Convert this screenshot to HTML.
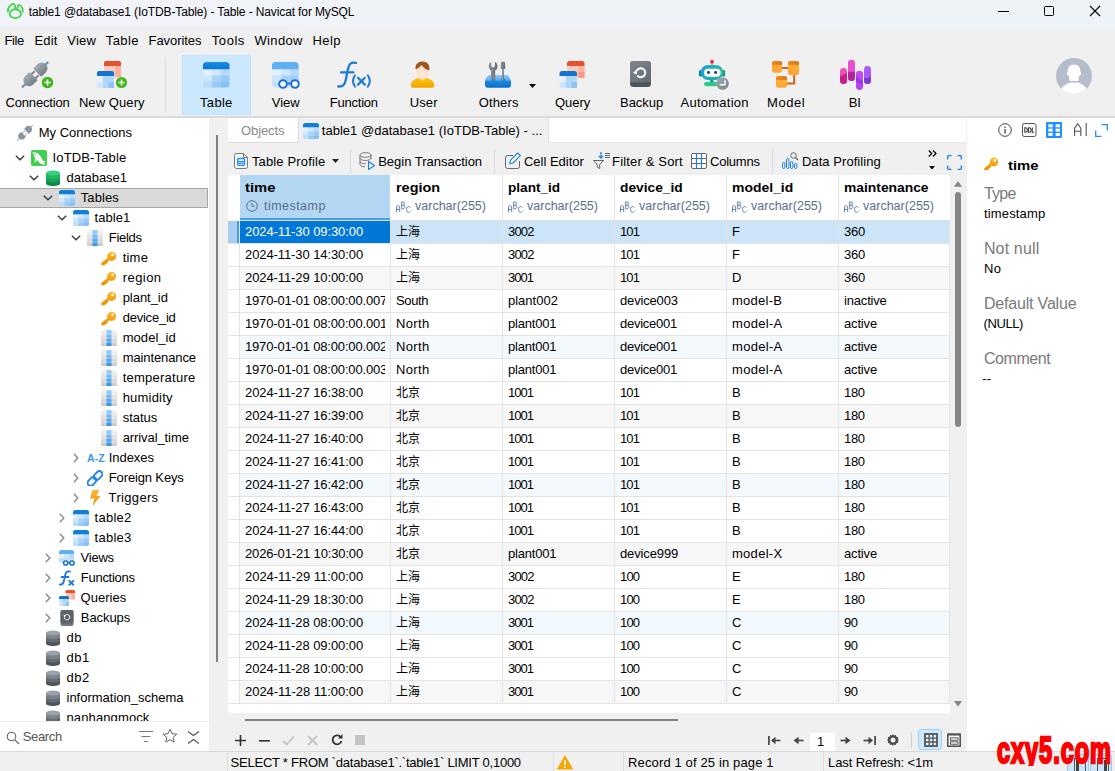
<!DOCTYPE html>
<html><head><meta charset="utf-8"><title>Navicat</title>
<style>
*{box-sizing:border-box;margin:0;padding:0}
html,body{width:1115px;height:771px;overflow:hidden;background:#f0f0f0;font-family:"Liberation Sans",sans-serif;font-size:13px;color:#000;}
body{position:relative}
.abs{position:absolute}
.t{position:absolute;white-space:nowrap;line-height:16px;height:16px;letter-spacing:-0.25px}
svg{display:block;position:absolute;overflow:visible}
.cjk{font-family:"Liberation Sans","Noto Sans CJK SC",sans-serif;font-size:12px;letter-spacing:0}
/* title bar */
#title{position:absolute;left:0;top:0;width:1115px;height:27px;background:linear-gradient(90deg,#f2f3f8 0%,#eff3f7 35%,#eef3f8 100%)}
/* toolbar */
#tb{position:absolute;left:0;top:27px;width:1115px;height:89px;background:#f0f0f0}
#tbline{position:absolute;left:0;top:116px;width:1115px;height:2px;background:#dadada}
.tl{position:absolute;top:95px;width:90px;text-align:center;line-height:16px;letter-spacing:-0.3px;white-space:nowrap}
/* tree */
#tree{position:absolute;left:0;top:118px;width:209px;height:603px;background:#fff;overflow:hidden}
.tr{position:absolute;left:0;width:209px;height:20px}
.tr .t{top:2px}
.chev{position:absolute;top:6px;width:9px;height:9px}
/* main */
#main{position:absolute;left:228px;top:118px;width:739px;height:633px;background:#f0f0f0;overflow:hidden}
.grow{position:absolute;left:0;width:722px;height:23px;background:#fff;border-bottom:1px solid #e3e3e3}
.grow.alt{background:#f4f9fd}
.grow.altg{background:#f7f7f7}
.grow.sel{background:#cce4f7}
.gc{position:absolute;top:0;height:22px;line-height:22px;padding-left:5px;border-right:1px solid #e3e3e3;white-space:nowrap;overflow:hidden;letter-spacing:-0.2px}
.gc.cur{background:#0078d7;color:#fff}
.gc.long .ct{display:block;width:140px;overflow:hidden}
.hc{position:absolute;top:57px;height:45px;background:#fff;border-right:1px solid #e3e3e3}
.hc b{position:absolute;left:5px;top:5px;line-height:16px;font-weight:bold;letter-spacing:-0.2px;white-space:nowrap}
.hc span{position:absolute;left:24px;top:23px;line-height:16px;color:#5a6e8c;letter-spacing:-0.25px;white-space:nowrap;font-size:12.5px}
/* right */
#right{position:absolute;left:967px;top:118px;width:148px;height:633px;background:#fff}
/* bottom */
#status{position:absolute;left:0;top:751px;width:1115px;height:20px;background:#f0f0f0;border-top:1px solid #d9d9d9}
.rl{font-size:16px;color:#7a7a7a;line-height:18px;height:18px;letter-spacing:-0.2px}
.ri{position:absolute;left:0;top:0;width:12px;height:22px;background:#fff;border-right:1px solid #e3e3e3}

</style></head>
<body>
<div id="title">
<svg style="left:6px;top:2px" width="19" height="19" viewBox="0 0 19 19"><g fill="none" stroke="#3dd44b" stroke-width="1.800" stroke-linecap="round" stroke-linejoin="round"><ellipse cx="9.350" cy="11.800" rx="5.700" ry="4.400"></ellipse><path d="M1.900 9.700C1.500 5.600 4.300 2.400 7.200 1.900c1.400-.2 2 1.900 2.200 5.300"></path><path d="M16.800 9.700C17 6.700 15.400 3.700 13.300 3c-1.100-.3-1.800 1.500-2 3.800"></path></g></svg>
<div class="t" style="left: 28.7px; top: 4px; font-size: 12px; letter-spacing: -0.12px;">table1 @database1 (IoTDB-Table) - Table - Navicat for MySQL</div>
<svg style="left:998px;top:11px" width="11" height="1" viewBox="0 0 11 1"><rect width="11" height="1" fill="#000"></rect></svg>
<svg style="left:1044px;top:6px" width="10" height="10" viewBox="0 0 10 10"><rect x=".5" y=".5" width="9" height="9" rx="1" fill="none" stroke="#000"></rect></svg>
<svg style="left:1090px;top:6px" width="10" height="10" viewBox="0 0 10 10"><path d="M0 0L10 10M10 0L0 10" stroke="#000" stroke-width="1.1"></path></svg>
</div>

<div id="tb">
<!-- menu -->
<div class="t" style="left: 4.5px; top: 6px; letter-spacing: -0.38px;">File</div>
<div class="t" style="left: 34.5px; top: 6px; letter-spacing: 0.13px;">Edit</div>
<div class="t" style="left: 67.3px; top: 6px; letter-spacing: 0.22px;">View</div>
<div class="t" style="left: 105.8px; top: 6px; letter-spacing: 0.41px;">Table</div>
<div class="t" style="left: 148.5px; top: 6px; letter-spacing: -0.06px;">Favorites</div>
<div class="t" style="left: 211.8px; top: 6px; letter-spacing: 0.55px;">Tools</div>
<div class="t" style="left: 254.5px; top: 6px; letter-spacing: 0.35px;">Window</div>
<div class="t" style="left: 312.5px; top: 6px; letter-spacing: 0.42px;">Help</div>
<!-- separator -->
<div class="abs" style="left:165px;top:30px;width:1px;height:56px;background:#dcdcdc"></div>
<!-- selected button -->
<div class="abs" style="left:182px;top:28px;width:69px;height:60px;background:#cce8ff;border:1px solid #c3e3fd"></div>
</div>
<!-- ICONS (page coords) -->
<!-- Connection -->
<svg style="left:20px;top:59px" width="34" height="32" viewBox="0 0 34 32">
 <defs><linearGradient id="plg" x1="0" y1="0" x2="0" y2="1"><stop offset="0" stop-color="#a4abb2"></stop><stop offset="1" stop-color="#767e86"></stop></linearGradient></defs>
 <g transform="translate(15.300,15.500) rotate(-44)">
  <rect x="-18.500" y="-1.100" width="6" height="2.200" fill="#6990b8"></rect>
  <path d="M-8.500-5.800H-3.300a1 1 0 0 1 1 1V4.800a1 1 0 0 1-1 1H-8.500a5.800 5.800 0 0 1 0-11.600z" fill="url(#plg)"></path>
  <rect x="-2.500" y="-3.800" width="4.300" height="1.900" fill="#7d858c"></rect><rect x="-2.500" y="1.900" width="4.300" height="1.900" fill="#7d858c"></rect>
  <path d="M9 -5.800H3.800a1.200 1.200 0 0 0-1.200 1.200V4.600a1.200 1.200 0 0 0 1.200 1.200H9a5.800 5.800 0 0 0 0-11.600z" fill="url(#plg)"></path>
  <rect x="13.500" y="-1.100" width="4.500" height="2.200" fill="#6990b8"></rect>
 </g>
 <circle cx="27.500" cy="23.500" r="5.700" fill="#3db51c"></circle><path d="M24.400 23.500h6.200M27.500 20.400v6.200" stroke="#fff" stroke-width="1.600"></path>
</svg>
<!-- New Query -->
<svg style="left:96px;top:60px" width="34" height="30" viewBox="0 0 34 30">
 <rect x="8" y="1" width="17" height="16.500" rx="2" fill="#fbcabb"></rect><path d="M8 3a2 2 0 0 1 2-2h13a2 2 0 0 1 2 2v3H8z" fill="#e5532d"></path>
 <rect x="19" y="6" width="6" height="11" fill="#f9a58c" opacity=".7"></rect>
 <rect x="1" y="11" width="17" height="17" rx="2" fill="#cfe6fb"></rect><path d="M1 13a2 2 0 0 1 2-2h13a2 2 0 0 1 2 2v3H1z" fill="#1373cf"></path>
 <rect x="7" y="16" width="11" height="12" fill="#a9d3f8" opacity=".8"></rect><rect x="12.500" y="22" width="5.500" height="6" fill="#8cc4f5"></rect><rect x="1" y="16" width="6" height="6" fill="#e6f2fd"></rect>
 <circle cx="25.500" cy="22.500" r="5.600" fill="#3db81e"></circle><path d="M22.500 22.500h6M25.500 19.500v6" stroke="#fff" stroke-width="1.500"></path>
</svg>
<!-- Table -->
<svg style="left:203px;top:62px" width="27" height="26" viewBox="0 0 27 26">
 <rect x="0" y="0" width="26.500" height="25.500" rx="3.500" fill="#bfdffb"></rect>
 <path d="M0 3.500A3.500 3.500 0 0 1 3.500 0h19.500a3.500 3.500 0 0 1 3.500 3.500V7.500H0z" fill="url(#tbg)"></path>
 <defs><linearGradient id="tbg" x1="0" y1="0" x2="0" y2="1"><stop offset="0" stop-color="#1a8de0"></stop><stop offset="1" stop-color="#0877d4"></stop></linearGradient></defs>
 <rect x="0" y="7.500" width="9" height="6" fill="#e3f1fd"></rect><rect x="9" y="7.500" width="9" height="6" fill="#cfe6fc"></rect><rect x="18" y="7.500" width="8.500" height="6" fill="#b4d9fa"></rect>
 <rect x="0" y="13.500" width="9" height="6" fill="#cfe6fc"></rect><rect x="9" y="13.500" width="9" height="6" fill="#a9d3f9"></rect><rect x="18" y="13.500" width="8.500" height="6" fill="#96c9f7"></rect>
 <path d="M0 19.500h9v6H3.500A3.500 3.500 0 0 1 0 22z" fill="#b9dcfa"></path><rect x="9" y="19.500" width="9" height="6" fill="#96c9f7"></rect><path d="M18 19.500h8.500V22a3.500 3.500 0 0 1-3.500 3.500H18z" fill="#84c0f6"></path>
</svg>
<!-- View -->
<svg style="left:272px;top:62px" width="30" height="30" viewBox="0 0 30 30">
 <rect x="0" y="0" width="26.500" height="25.500" rx="3.500" fill="#c4e1fb"></rect>
 <path d="M0 3.500A3.500 3.500 0 0 1 3.500 0h19.500a3.500 3.500 0 0 1 3.500 3.500V7.500H0z" fill="#5fb0f0"></path>
 <rect x="0" y="7.500" width="9" height="6" fill="#e3f1fd"></rect><rect x="9" y="7.500" width="9" height="6" fill="#cfe6fc"></rect><rect x="18" y="7.500" width="8.500" height="6" fill="#b4d9fa"></rect>
 <rect x="0" y="13.500" width="9" height="6" fill="#cfe6fc"></rect><rect x="9" y="13.500" width="9" height="6" fill="#a9d3f9"></rect><rect x="18" y="13.500" width="8.500" height="6" fill="#9ccdf8"></rect>
 <circle cx="11" cy="22" r="3.800" fill="#fff" stroke="#1a73d0" stroke-width="2"></circle><circle cx="23" cy="22" r="3.800" fill="#fff" stroke="#1a73d0" stroke-width="2"></circle><path d="M14.800 21.500h4.400" stroke="#1a73d0" stroke-width="2"></path>
</svg>
<!-- Function -->
<svg style="left:337px;top:60px" width="36" height="30" viewBox="0 0 36 30">
 <g fill="none" stroke="#1d7ad6" stroke-linecap="round">
 <path d="M1.200 26.300c4.300.9 6.500-1.300 7.500-6.300L11.200 8c1-4.600 3.600-6.200 7.800-5.100" stroke-width="2.300"></path>
 <path d="M4 12.300H16.500" stroke-width="2.300"></path>
 <path d="M18 15.300c-2.600 3.700-2.600 7.700 0 11.400" stroke-width="2"></path>
 <path d="M30.800 15.300c2.600 3.700 2.600 7.700 0 11.400" stroke-width="2"></path>
 <path d="M21 17.800l6.800 6.800M27.800 17.800l-6.800 6.800" stroke-width="2.200"></path></g>
</svg>
<!-- User -->
<svg style="left:410px;top:61px" width="26" height="28" viewBox="0 0 26 28">
 <defs><linearGradient id="ubg" x1="0" y1="0" x2="0" y2="1"><stop offset="0" stop-color="#fdc40c"></stop><stop offset="1" stop-color="#f1a300"></stop></linearGradient></defs>
 <path d="M.8 24.600C.8 20 5 17.900 9 17.100h7c4 .8 8.200 2.900 8.200 7.500a2.200 2.200 0 0 1-2.200 2.200H3a2.200 2.200 0 0 1-2.200-2.200z" fill="url(#ubg)"></path>
 <path d="M9.300 14h6.200v3.600l-3.100 2.300-3.100-2.300z" fill="#fbd9c6"></path>
 <ellipse cx="12.400" cy="9.600" rx="6.900" ry="8.200" fill="#fee5d6"></ellipse>
 <path d="M5.600 8.300C4.900 3.200 8.300.6 12.500.6c4.300 0 7.700 2.700 6.800 8.900C17 8.800 13.500 7.200 11.300 4 10 6.200 7.700 7.800 5.600 8.300z" fill="#a2541b"></path>
</svg>
<!-- Others -->
<svg style="left:484px;top:60px" width="28" height="29" viewBox="0 0 28 29">
 <defs><linearGradient id="obx" x1="0" y1="0" x2="0" y2="1"><stop offset="0" stop-color="#1c8ee4"></stop><stop offset="1" stop-color="#0e6bcc"></stop></linearGradient>
 <linearGradient id="obt" x1="0" y1="0" x2="0" y2="1"><stop offset="0" stop-color="#8ccafc"></stop><stop offset="1" stop-color="#56abf3"></stop></linearGradient>
 <linearGradient id="otl" x1="0" y1="0" x2="1" y2="0"><stop offset="0" stop-color="#8c949b"></stop><stop offset="1" stop-color="#646c74"></stop></linearGradient></defs>
 <path d="M1 20.300L4 15.500c.4-.4.900-.6 1.500-.6h17c.6 0 1.100.2 1.500.6l3 4.800z" fill="url(#obt)"></path>
 <path d="M7.300 1.700v4.100a1.800 1.800 0 0 0 3.600 0V1.700A5 5 0 0 1 11.200 10.400V21H7V10.400A5 5 0 0 1 7.300 1.700z" fill="url(#otl)"></path>
 <path d="M18.300 1.800h1.400c.7 0 1.200.5 1.300 1.200l.4 5.300c0 .4-.3.700-.7.700h-.9v9.200l1.700 1.600v1.200h-5v-1.200l1.700-1.600V9h-.9c-.4 0-.7-.3-.7-.7L17 3c.1-.7.600-1.200 1.300-1.200z" fill="url(#otl)"></path>
 <path d="M1 20.300h26v4.500a3 3 0 0 1-3 3H4a3 3 0 0 1-3-3z" fill="url(#obx)"></path>
</svg>
<svg style="left:529px;top:84px" width="7" height="4" viewBox="0 0 7 4"><path d="M0 0h7L3.500 4z" fill="#000"></path></svg>
<!-- Query -->
<svg style="left:559px;top:60px" width="27" height="29" viewBox="0 0 27 29">
 <rect x="8" y="1" width="17.500" height="17" rx="2.500" fill="#fbcabb"></rect><path d="M8 3.500A2.500 2.500 0 0 1 10.500 1h12.500a2.500 2.500 0 0 1 2.500 2.500V6H8z" fill="#e5532d"></path>
 <rect x="19.500" y="6" width="6" height="12" fill="#f9a58c" opacity=".7"></rect><rect x="19.500" y="12" width="6" height="6" fill="#f58a6c" opacity=".6"></rect>
 <rect x=".5" y="11" width="17.500" height="17" rx="2.500" fill="#cfe6fb"></rect><path d="M.5 13.500A2.500 2.500 0 0 1 3 11h12.500a2.500 2.500 0 0 1 2.500 2.500V16H.5z" fill="#1373cf"></path>
 <rect x="6.500" y="16" width="11.500" height="12" fill="#a9d3f8" opacity=".8"></rect><rect x="12.500" y="22" width="5.500" height="6" fill="#8cc4f5"></rect><rect x=".5" y="16" width="6" height="6" fill="#e6f2fd"></rect>
</svg>
<!-- Backup -->
<svg style="left:630px;top:60px" width="22" height="28" viewBox="0 0 22 28">
 <defs><linearGradient id="bkg" x1="0" y1="0" x2="1" y2="1"><stop offset="0" stop-color="#80878e"></stop><stop offset="1" stop-color="#636a72"></stop></linearGradient></defs>
 <rect x="0" y="1" width="21" height="26" rx="3.500" fill="#4f555c"></rect>
 <path d="M0 4.500A3.500 3.500 0 0 1 3.500 1h14A3.500 3.500 0 0 1 21 4.500V22.300H0z" fill="url(#bkg)"></path>
 <path d="M6.700 10.900a4.500 4.500 0 1 1 .6 4.700" fill="none" stroke="#fff" stroke-width="2"></path>
 <path d="M3.100 12.800l3.500-3.200.4 5.200z" fill="#fff"></path>
</svg>
<!-- Automation -->
<svg style="left:697px;top:59px" width="34" height="32" viewBox="0 0 34 32">
 <defs><linearGradient id="rbg" x1="0" y1="0" x2="1" y2="0"><stop offset="0" stop-color="#1c9edb"></stop><stop offset="1" stop-color="#30c098"></stop></linearGradient>
 <linearGradient id="rbd" x1="0" y1="0" x2="1" y2="1"><stop offset="0" stop-color="#a3adb9"></stop><stop offset="1" stop-color="#76818d"></stop></linearGradient></defs>
 <rect x="14.400" y="4" width="1.300" height="3" fill="#8a9299"></rect><circle cx="15" cy="2.700" r="2" fill="#ee3344"></circle>
 <rect x="1.900" y="11" width="3.500" height="6.500" rx="1.500" fill="#0f8791"></rect><rect x="24.600" y="11" width="3.500" height="6.500" rx="1.500" fill="#12937f"></rect>
 <rect x="3.700" y="5.900" width="22.600" height="15.100" rx="7.500" fill="url(#rbg)"></rect>
 <rect x="7" y="9.700" width="16.600" height="8" rx="4" fill="#fff"></rect>
 <circle cx="11.500" cy="13.500" r="1.450" fill="#1b2f7a"></circle><circle cx="18.600" cy="13.500" r="1.450" fill="#1b2f7a"></circle>
 <rect x="13.200" y="20.500" width="3.200" height="3" fill="#1793a5"></rect>
 <rect x="7" y="22.900" width="14" height="4.300" rx="2.100" fill="#2fc987"></rect>
 <circle cx="25.500" cy="24.500" r="6.300" fill="url(#rbd)"></circle>
 <path d="M28 21.200V25.800H22.700" fill="none" stroke="#fff" stroke-width="1.500"></path>
</svg>
<!-- Model -->
<svg style="left:772px;top:60px" width="28" height="29" viewBox="0 0 28 29">
 <defs><linearGradient id="mo1" x1="0" y1="0" x2="0" y2="1"><stop offset="0" stop-color="#ffb430"></stop><stop offset="1" stop-color="#ffa236"></stop></linearGradient>
 <linearGradient id="mo2" x1="0" y1="0" x2="1" y2="1"><stop offset="0" stop-color="#f59024"></stop><stop offset="1" stop-color="#d96c18"></stop></linearGradient></defs>
 <path d="M9.500 8H17M22.200 14v9.500H14" fill="none" stroke="#c8661c" stroke-width="2"></path>
 <rect x="0" y=".9" width="10" height="11.900" rx="2.200" fill="url(#mo1)"></rect><path d="M0 3.100A2.200 2.200 0 0 1 2.200.9h5.600A2.200 2.200 0 0 1 10 3.100V4.700H0z" fill="url(#mo2)"></path>
 <rect x="16" y=".9" width="11" height="14" rx="2.200" fill="url(#mo1)"></rect><path d="M16 3.100A2.200 2.200 0 0 1 18.200.9h6.600A2.200 2.200 0 0 1 27 3.100V4.700H16z" fill="url(#mo2)"></path>
 <rect x="4" y="16" width="11" height="11.800" rx="2.200" fill="url(#mo1)"></rect><path d="M4 18.200A2.200 2.200 0 0 1 6.200 16h6.600A2.200 2.200 0 0 1 15 18.200V19.800H4z" fill="url(#mo2)"></path>
</svg>
<!-- BI -->
<svg style="left:840px;top:59px" width="32" height="32" viewBox="0 0 32 32">
 <rect x="0" y="9.100" width="7" height="15.700" rx="3.400" fill="#f04cb8"></rect><path d="M0 17.500L7 14v7.400a3.400 3.400 0 0 1-7 0z" fill="#c81e8c"></path>
 <rect x="8" y=".8" width="7" height="21" rx="3.400" fill="#e650cf"></rect><path d="M8 13.500c2.300-1.400 4.700-1.400 7 0v5a3.400 3.400 0 0 1-7 0z" fill="#b6229f"></path>
 <rect x="16" y="12" width="7" height="19" rx="3.400" fill="#b545f2"></rect><path d="M16 15.400a3.400 3.400 0 0 1 3.500-3.400v0c1.900 0 3.500 1.500 3.500 3.400V22L16 17.500z" fill="#c24af5"></path><path d="M16 17l7 5v4l-7-3z" fill="#8a2bc9" opacity=".55"></path>
 <rect x="24" y="7" width="7" height="17.800" rx="3.400" fill="#a65bf8"></rect><path d="M24 18.500c2.300 1.200 4.700.6 7-1.500v4.400a3.400 3.400 0 0 1-7 0z" fill="#7d3bd0"></path>
</svg>
<!-- avatar -->
<svg style="left:1056px;top:58px" width="36" height="36" viewBox="0 0 36 36">
 <defs><clipPath id="avc"><circle cx="18" cy="18" r="18"></circle></clipPath></defs>
 <circle cx="18" cy="18" r="18" fill="#b5bdcc"></circle>
 <g clip-path="url(#avc)" fill="#fff"><path d="M18 6.500c4 0 6.300 2.800 6.300 6.500 0 1.500 1.200 2 .8 3.200-.4 1-1.600 1-2 2.300-.5 1.500-.6 3.500-.6 4.500h-9c0-1-.1-3-.6-4.500-.4-1.300-1.600-1.300-2-2.300-.4-1.200.8-1.700.8-3.200 0-3.700 2.300-6.500 6.300-6.500z"></path><path d="M4.500 33c1-5 6-7 9.500-8.500h8c3.500 1.500 8.500 3.500 9.500 8.500L18 40z"></path></g>
</svg>
<!-- labels -->
<div class="tl" style="left: 5.5px; letter-spacing: -0.16px; text-align: left; width: auto;">Connection</div>
<div class="tl" style="left: 78.9px; letter-spacing: 0.08px; text-align: left; width: auto;">New Query</div>
<div class="tl" style="left: 200.1px; letter-spacing: 0.28px; text-align: left; width: auto;">Table</div>
<div class="tl" style="left: 271.7px; letter-spacing: 0.02px; text-align: left; width: auto;">View</div>
<div class="tl" style="left: 329.7px; letter-spacing: -0.21px; text-align: left; width: auto;">Function</div>
<div class="tl" style="left: 409.8px; letter-spacing: 0.08px; text-align: left; width: auto;">User</div>
<div class="tl" style="left: 478.7px; letter-spacing: 0.14px; text-align: left; width: auto;">Others</div>
<div class="tl" style="left: 554.9px; letter-spacing: 0.02px; text-align: left; width: auto;">Query</div>
<div class="tl" style="left: 620px; letter-spacing: -0.03px; text-align: left; width: auto;">Backup</div>
<div class="tl" style="left: 680.5px; letter-spacing: 0.25px; text-align: left; width: auto;">Automation</div>
<div class="tl" style="left: 767px; letter-spacing: 0.55px; text-align: left; width: auto;">Model</div>
<div class="tl" style="left: 848.8px; letter-spacing: -0.19px; text-align: left; width: auto;">BI</div>
<div id="tbline"></div>


<svg width="0" height="0" style="position:absolute"><defs>
<symbol id="i-table" viewBox="0 0 16 16">
 <rect x="0" y="0" width="16" height="16" rx="2.500" fill="#bfdffb"></rect>
 <path d="M0 2.500A2.500 2.500 0 0 1 2.500 0h11A2.500 2.500 0 0 1 16 2.500V4.500H0z" fill="#0f7fd8"></path>
 <rect x="0" y="4.500" width="5.500" height="4" fill="#e3f1fd"></rect><rect x="5.500" y="4.500" width="5.500" height="4" fill="#cfe6fc"></rect><rect x="11" y="4.500" width="5" height="4" fill="#b9dcfa"></rect>
 <rect x="0" y="8.500" width="5.500" height="4" fill="#cfe6fc"></rect><rect x="5.500" y="8.500" width="5.500" height="4" fill="#a9d3f9"></rect><rect x="11" y="8.500" width="5" height="4" fill="#96c9f7"></rect>
 <path d="M0 12.500h5.500V16H2.500A2.500 2.500 0 0 1 0 13.500z" fill="#b9dcfa"></path><rect x="5.500" y="12.500" width="5.500" height="3.500" fill="#96c9f7"></rect><path d="M11 12.500h5v1A2.500 2.500 0 0 1 13.500 16H11z" fill="#84c0f6"></path>
</symbol>
<symbol id="i-col" viewBox="0 0 16 16">
 <defs><linearGradient id="gcol" x1="0" y1="0" x2="0" y2="1"><stop offset="0" stop-color="#f4f4f4"></stop><stop offset="1" stop-color="#c9c9c9"></stop></linearGradient>
 <linearGradient id="bcol" x1="0" y1="0" x2="0" y2="1"><stop offset="0" stop-color="#9fd0f8"></stop><stop offset="1" stop-color="#2f8fe8"></stop></linearGradient></defs>
 <rect x="0" y="0" width="16" height="16" rx="1.500" fill="url(#gcol)"></rect>
 <rect x="5.500" y="0" width="5" height="16" fill="url(#bcol)"></rect>
 <path d="M0 4h16M0 8h16M0 12h16" stroke="#fff" stroke-opacity=".55" stroke-width=".8"></path>
</symbol>
<symbol id="i-key" viewBox="0 0 16 16">
 <defs><linearGradient id="gkey" x1="0" y1="0" x2="0" y2="1"><stop offset="0" stop-color="#fdbb2d"></stop><stop offset="1" stop-color="#f08c00"></stop></linearGradient></defs>
 <path d="M10.600 1.700a4.600 4.600 0 1 1-2.300 8.600L6.900 11.600v1.300H5.500v1.400H3.900v.9H.3v-2.100L6.400 7.900A4.600 4.600 0 0 1 10.600 1.700zM11.500 3.500a1.300 1.300 0 1 0 0 2.600 1.300 1.300 0 0 0 0-2.600z" fill="url(#gkey)" fill-rule="evenodd"></path>
</symbol>
<symbol id="i-dbg" viewBox="0 0 16 16">
 <path d="M1 3v10.500C1 15 4 16 8 16s7-1 7-2.500V3z" fill="#0c8a47"></path>
 <path d="M1 3v7C1 11.500 4 12.500 8 12.500s7-1 7-2.500V3z" fill="#17a458"></path>
 <path d="M1 3v3.500C1 8 4 9 8 9s7-1 7-2.500V3z" fill="#22b866"></path>
 <ellipse cx="8" cy="3" rx="7" ry="2.600" fill="#35cf7c"></ellipse>
</symbol>
<symbol id="i-dbx" viewBox="0 0 16 16">
 <path d="M1 3v10.500C1 15 4 16 8 16s7-1 7-2.500V3z" fill="#4f555b"></path>
 <path d="M1 3v7C1 11.500 4 12.500 8 12.500s7-1 7-2.500V3z" fill="#666c73"></path>
 <path d="M1 3v3.500C1 8 4 9 8 9s7-1 7-2.500V3z" fill="#7d848b"></path>
 <ellipse cx="8" cy="3" rx="7" ry="2.600" fill="#9aa1a8"></ellipse>
</symbol>
<symbol id="i-conn" viewBox="0 0 16 16">
 <rect x="0" y="0" width="16" height="16" rx="1.800" fill="#3fd04f"></rect>
 <path d="M1.200 2.200L4 2.400C6.500 2.800 8.800 4.500 10.300 7.500 11 9 11.600 10.200 12.300 10.800L14.800 11.200 13 12.600 14.200 14.600C12.500 14.800 10.500 14.500 9 13.300 7.500 12.200 6.500 11 5.800 9.800L5 11.500 3.200 12.300 4.300 9.200C3.600 8 3.200 6.500 3.200 5z" fill="#fff"></path>
 <circle cx="4.500" cy="4.400" r=".55" fill="#3fd04f"></circle>
</symbol>
<symbol id="i-plug" viewBox="0 0 16 16">
 <g transform="translate(8,7.900) rotate(-45)">
  <path d="M-11-.1h3.500" stroke="#6f9cc4" stroke-width="1.300" stroke-dasharray="1.300 .7"></path>
  <path d="M-4.500-3.500H-2.700a.6.600 0 0 1 .6.600V2.900a.6.600 0 0 1-.6.600H-4.500a3.500 3.500 0 0 1 0-7z" fill="#8c949b"></path>
  <path d="M-2-1.700h3.500M-2 1.700h3.500" stroke="#6f9cc4" stroke-width="1.100" stroke-dasharray="1.200 .7"></path>
  <path d="M4.800-3.500H2.700a.6.600 0 0 0-.6.600V2.900a.6.600 0 0 0 .6.600H4.800a3.500 3.500 0 0 0 0-7z" fill="#8c949b"></path>
  <path d="M8.300-.1h3" stroke="#6f9cc4" stroke-width="1.300" stroke-dasharray="1.300 .7"></path>
 </g>
</symbol>
<symbol id="i-link" viewBox="0 0 16 16">
 <g transform="translate(8,8.500) rotate(-45)" fill="none" stroke="#2187e0" stroke-width="1.900">
  <rect x="-9.200" y="-3" width="10" height="6" rx="3"></rect>
  <rect x="-.8" y="-3" width="10" height="6" rx="3"></rect>
 </g>
</symbol>
<symbol id="i-trig" viewBox="0 0 16 16">
 <defs><linearGradient id="gtr" x1="0" y1="0" x2="0" y2="1"><stop offset="0" stop-color="#fdbb3a"></stop><stop offset="1" stop-color="#f28a00"></stop></linearGradient></defs>
 <path d="M5.500 0h7L9.500 6h4L5.500 16l2-7.500H3z" fill="url(#gtr)"></path>
</symbol>
<symbol id="i-view" viewBox="0 0 16 16">
 <rect x="0" y="0" width="15" height="13" rx="2.500" fill="#c4e1fb"></rect>
 <path d="M0 2.500A2.500 2.500 0 0 1 2.500 0h10A2.500 2.500 0 0 1 15 2.500V4H0z" fill="#5fb0f0"></path>
 <rect x="0" y="4" width="5" height="4" fill="#e3f1fd"></rect><rect x="5" y="4" width="5" height="4" fill="#cfe6fc"></rect><rect x="10" y="4" width="5" height="4" fill="#b4d9fa"></rect>
 <circle cx="6.700" cy="13" r="2.100" fill="#fff" stroke="#1a73d0" stroke-width="1.500"></circle><circle cx="13" cy="13" r="2.100" fill="#fff" stroke="#1a73d0" stroke-width="1.500"></circle><path d="M8.800 12.800h2.100" stroke="#1a73d0" stroke-width="1.400"></path>
</symbol>
<symbol id="i-fx" viewBox="0 0 16 16">
 <g fill="none" stroke="#1d7ad6" stroke-linecap="round">
 <path d="M.8 14.500c2.500.5 3.500-.8 4.100-3.500L6.300 4.500C6.900 2 8.300 1 11 1.600" stroke-width="1.800"></path>
 <path d="M2.500 7H9.500" stroke-width="1.800"></path>
 <path d="M10.300 10.800l4 4M14.300 10.800l-4 4" stroke-width="1.900"></path></g>
</symbol>
<symbol id="i-query" viewBox="0 0 16 16">
 <rect x="6.500" y="0" width="9.500" height="9.500" rx="1.500" fill="#fbcabb"></rect><path d="M6.500 1.500A1.500 1.500 0 0 1 8 0h6.500A1.500 1.500 0 0 1 16 1.500V3H6.500z" fill="#e5532d"></path>
 <rect x="12.500" y="3" width="3.500" height="6.500" fill="#f9a58c" opacity=".7"></rect>
 <rect x="0" y="6" width="10" height="10" rx="1.500" fill="#cfe6fb"></rect><path d="M0 7.500A1.500 1.500 0 0 1 1.500 6h7A1.500 1.500 0 0 1 10 7.500V9H0z" fill="#1373cf"></path>
 <rect x="3.500" y="9" width="6.500" height="7" fill="#a9d3f8" opacity=".8"></rect><rect x="6.700" y="12.500" width="3.300" height="3.500" fill="#8cc4f5"></rect>
</symbol>
<symbol id="i-backup" viewBox="0 0 16 16">
 <rect x="1.500" y="0" width="13" height="16" rx="2" fill="#74797f"></rect>
 <rect x="1.500" y="0" width="13" height="13.500" rx="2" fill="#5e6369"></rect>
 <path d="M5.300 7.200a2.700 2.700 0 1 0 1-2.100" fill="none" stroke="#fff" stroke-width="1"></path>
 <path d="M4.600 4.500l.4 2.400 2.300-.8z" fill="#fff"></path>
</symbol>
<symbol id="ch-d" viewBox="0 0 10 6"><path d="M.8.800L5 4.800 9.200.8" fill="none" stroke="#3a3a3a" stroke-width="1.400"></path></symbol>
<symbol id="ch-r" viewBox="0 0 6 10"><path d="M.8.800L4.800 5 .8 9.200" fill="none" stroke="#8a8a8a" stroke-width="1.400"></path></symbol>
</defs></svg>
<div id="tree">
<div class="tr" style="top:5px"><svg style="left:17px;top:2px" width="16" height="16"><use href="#i-plug"></use></svg><div class="t" style="left: 38.7px; letter-spacing: 0.01px;">My Connections</div></div>
<div class="tr" style="top:30px"><svg style="left:15px;top:7px" width="10" height="6"><use href="#ch-d"></use></svg><svg style="left:31px;top:2px" width="16" height="16"><use href="#i-conn"></use></svg><div class="t" style="left: 52.6px; letter-spacing: 0.13px;">IoTDB-Table</div></div>
<div class="tr" style="top:50px"><svg style="left:29px;top:7px" width="10" height="6"><use href="#ch-d"></use></svg><svg style="left:45px;top:2px" width="16" height="16"><use href="#i-dbg"></use></svg><div class="t" style="left: 66.5px; letter-spacing: -0.03px;">database1</div></div>
<div class="tr" style="top:70px"><div class="abs" style="left:0;top:0px;width:208px;height:20px;background:#d9d9d9;border:1px solid #a6a6a6;border-left:none"></div><svg style="left:43px;top:7px" width="10" height="6"><use href="#ch-d"></use></svg><svg style="left:59px;top:2px" width="16" height="16"><use href="#i-table"></use></svg><div class="t" style="left: 80.7px; letter-spacing: 0.12px;">Tables</div></div>
<div class="tr" style="top:90px"><svg style="left:57px;top:7px" width="10" height="6"><use href="#ch-d"></use></svg><svg style="left:73px;top:2px" width="16" height="16"><use href="#i-table"></use></svg><div class="t" style="left: 94.6px; letter-spacing: 0.03px;">table1</div></div>
<div class="tr" style="top:110px"><svg style="left:71px;top:7px" width="10" height="6"><use href="#ch-d"></use></svg><svg style="left:87px;top:2px" width="16" height="16"><use href="#i-col"></use></svg><div class="t" style="left: 108.8px; letter-spacing: -0.28px;">Fields</div></div>
<div class="tr" style="top:130px"><svg style="left:101px;top:2px" width="16" height="16"><use href="#i-key"></use></svg><div class="t" style="left: 122.7px; letter-spacing: 0.21px;">time</div></div>
<div class="tr" style="top:150px"><svg style="left:101px;top:2px" width="16" height="16"><use href="#i-key"></use></svg><div class="t" style="left: 122.7px; letter-spacing: 0.45px;">region</div></div>
<div class="tr" style="top:170px"><svg style="left:101px;top:2px" width="16" height="16"><use href="#i-key"></use></svg><div class="t" style="left: 122.7px; letter-spacing: -0.05px;">plant_id</div></div>
<div class="tr" style="top:190px"><svg style="left:101px;top:2px" width="16" height="16"><use href="#i-key"></use></svg><div class="t" style="left: 122.7px; letter-spacing: -0.23px;">device_id</div></div>
<div class="tr" style="top:210px"><svg style="left:101px;top:2px" width="16" height="16"><use href="#i-col"></use></svg><div class="t" style="left: 122.7px; letter-spacing: 0.05px;">model_id</div></div>
<div class="tr" style="top:230px"><svg style="left:101px;top:2px" width="16" height="16"><use href="#i-col"></use></svg><div class="t" style="left: 122.7px; letter-spacing: -0.11px;">maintenance</div></div>
<div class="tr" style="top:250px"><svg style="left:101px;top:2px" width="16" height="16"><use href="#i-col"></use></svg><div class="t" style="left: 122.7px; letter-spacing: 0.24px;">temperature</div></div>
<div class="tr" style="top:270px"><svg style="left:101px;top:2px" width="16" height="16"><use href="#i-col"></use></svg><div class="t" style="left: 122.7px; letter-spacing: 0.2px;">humidity</div></div>
<div class="tr" style="top:290px"><svg style="left:101px;top:2px" width="16" height="16"><use href="#i-col"></use></svg><div class="t" style="left: 122.7px; letter-spacing: -0.02px;">status</div></div>
<div class="tr" style="top:310px"><svg style="left:101px;top:2px" width="16" height="16"><use href="#i-col"></use></svg><div class="t" style="left: 122.7px; letter-spacing: -0.09px;">arrival_time</div></div>
<div class="tr" style="top:330px"><svg style="left:73px;top:5px" width="6" height="10"><use href="#ch-r"></use></svg><div class="abs" style="left:87px;top:4px;font-size:10.5px;font-weight:bold;color:#3a96ea;line-height:12px;letter-spacing:0.1px">A-Z</div><div class="t" style="left: 108.8px; letter-spacing: -0.06px;">Indexes</div></div>
<div class="tr" style="top:350px"><svg style="left:73px;top:5px" width="6" height="10"><use href="#ch-r"></use></svg><svg style="left:87px;top:2px" width="16" height="16"><use href="#i-link"></use></svg><div class="t" style="left: 108.8px; letter-spacing: -0.14px;">Foreign Keys</div></div>
<div class="tr" style="top:370px"><svg style="left:73px;top:5px" width="6" height="10"><use href="#ch-r"></use></svg><svg style="left:87px;top:2px" width="16" height="16"><use href="#i-trig"></use></svg><div class="t" style="left: 108.6px; letter-spacing: 0.33px;">Triggers</div></div>
<div class="tr" style="top:390px"><svg style="left:59px;top:5px" width="6" height="10"><use href="#ch-r"></use></svg><svg style="left:73px;top:2px" width="16" height="16"><use href="#i-table"></use></svg><div class="t" style="left: 94.6px; letter-spacing: 0.26px;">table2</div></div>
<div class="tr" style="top:410px"><svg style="left:59px;top:5px" width="6" height="10"><use href="#ch-r"></use></svg><svg style="left:73px;top:2px" width="16" height="16"><use href="#i-table"></use></svg><div class="t" style="left: 94.6px; letter-spacing: 0.26px;">table3</div></div>
<div class="tr" style="top:430px"><svg style="left:45px;top:5px" width="6" height="10"><use href="#ch-r"></use></svg><svg style="left:59px;top:2px" width="16" height="16"><use href="#i-view"></use></svg><div class="t" style="left: 80.5px; letter-spacing: -0.21px;">Views</div></div>
<div class="tr" style="top:450px"><svg style="left:45px;top:5px" width="6" height="10"><use href="#ch-r"></use></svg><svg style="left:59px;top:2px" width="16" height="16"><use href="#i-fx"></use></svg><div class="t" style="left: 80.8px; letter-spacing: -0.27px;">Functions</div></div>
<div class="tr" style="top:470px"><svg style="left:45px;top:5px" width="6" height="10"><use href="#ch-r"></use></svg><svg style="left:59px;top:2px" width="16" height="16"><use href="#i-query"></use></svg><div class="t" style="left: 80.5px; letter-spacing: 0.03px;">Queries</div></div>
<div class="tr" style="top:490px"><svg style="left:45px;top:5px" width="6" height="10"><use href="#ch-r"></use></svg><svg style="left:59px;top:2px" width="16" height="16"><use href="#i-backup"></use></svg><div class="t" style="left: 80.8px; letter-spacing: -0.08px;">Backups</div></div>
<div class="tr" style="top:510px"><svg style="left:45px;top:2px" width="16" height="16"><use href="#i-dbx"></use></svg><div class="t" style="left: 66.5px; letter-spacing: 0.55px;">db</div></div>
<div class="tr" style="top:530px"><svg style="left:45px;top:2px" width="16" height="16"><use href="#i-dbx"></use></svg><div class="t" style="left: 66.5px; letter-spacing: 0.55px;">db1</div></div>
<div class="tr" style="top:550px"><svg style="left:45px;top:2px" width="16" height="16"><use href="#i-dbx"></use></svg><div class="t" style="left: 66.5px; letter-spacing: 0.55px;">db2</div></div>
<div class="tr" style="top:570px"><svg style="left:45px;top:2px" width="16" height="16"><use href="#i-dbx"></use></svg><div class="t" style="left: 66.5px; letter-spacing: 0px;">information_schema</div></div>
<div class="tr" style="top:590px"><svg style="left:45px;top:2px" width="16" height="16"><use href="#i-dbx"></use></svg><div class="t" style="left: 66.5px; letter-spacing: 0.12px;">nanhangmock</div></div>
</div>
<div class="abs" style="left:216px;top:135px;width:2px;height:527px;background:#808080"></div>
<div class="abs" style="left:0;top:721px;width:209px;height:30px;background:#fff;border-top:1px solid #efefef">
<svg style="left:6px;top:9px" width="14" height="14" viewBox="0 0 14 14"><circle cx="5.500" cy="5.500" r="4.300" fill="none" stroke="#666" stroke-width="1.100"></circle><path d="M8.700 8.700L13 13" stroke="#666" stroke-width="1.200"></path></svg>
<div class="t" style="left: 22.8px; top: 7px; color: rgb(85, 85, 85); letter-spacing: -0.36px;">Search</div>
<svg style="left:139px;top:9px" width="14" height="12" viewBox="0 0 14 12"><path d="M0 .5h14M2.500 5.500h9M5 10.500h4" stroke="#777" stroke-width="1"></path></svg>
<svg style="left:162px;top:6px" width="16" height="16" viewBox="0 0 16 16"><path d="M8 1.300l2 4.400 4.800.5-3.600 3.200 1 4.700L8 11.700l-4.200 2.400 1-4.700L1.200 6.200 6 5.700z" fill="none" stroke="#666" stroke-width="1"></path></svg>
<svg style="left:187px;top:9px" width="13" height="13" viewBox="0 0 13 13"><path d="M1 .600l5.500 3.900 5.500-3.900M1 12.400l5.500-3.900 5.500 3.900" fill="none" stroke="#555" stroke-width="1.200"></path></svg>
</div>

<div id="main">
<!-- tab strip -->
<div class="abs" style="left:0;top:0;width:738px;height:25px;background:#fff;border-bottom:1px solid #e6e6e6"></div>
<div class="abs" style="left:0;top:0;width:71px;height:25px;background:#fff;border-right:1px solid #dcdcdc;border-bottom:1px solid #dcdcdc"></div>
<div class="t" style="left: 13px; top: 5px; color: rgb(138, 138, 138); letter-spacing: -0.1px;">Objects</div>
<div class="abs" style="left:71px;top:0;width:250px;height:25px;background:#f0f0f0;border-right:1px solid #e2e2e2"></div>
<svg style="left:75px;top:5px" width="16" height="16"><use href="#i-table"></use></svg>
<div class="t" style="left: 93.8px; top: 5px; letter-spacing: 0.02px;">table1 @database1 (IoTDB-Table) - ...</div>
<!-- toolbar -->
<div id="mtb" class="abs" style="left:0;top:25px;width:738px;height:32px;background:#f0f0f0"></div>
<!-- Table Profile icon -->
<svg style="left:6px;top:35px" width="14" height="16" viewBox="0 0 14 16"><path d="M2.500.5h7l4 4v9a2 2 0 0 1-2 2h-9a2 2 0 0 1-2-2v-11a2 2 0 0 1 2-2z" fill="#fbfbfb" stroke="#777" stroke-width="1"></path><path d="M9.500.5v4h4" fill="none" stroke="#777" stroke-width="1"></path><rect x="3" y="4.800" width="8.200" height="8.200" rx="1.600" fill="#1e8fff"></rect><rect x="4.500" y="6.200" width="5.200" height="1.700" rx=".5" fill="#fff"></rect><path d="M4.300 9.700h1.300M6.400 9.700h1.400M8.600 9.700h1.300M4.300 11.500h1.300M6.400 11.500h1.400M8.600 11.500h1.300" stroke="#fff" stroke-width="1"></path></svg>
<div class="t" style="left: 23.9px; top: 36px; letter-spacing: 0.15px;">Table Profile</div>
<svg style="left:104px;top:41px" width="7" height="4" viewBox="0 0 7 4"><path d="M0 0h7L3.500 4z" fill="#222"></path></svg>
<div class="abs" style="left:122px;top:32px;width:1px;height:24px;background:#dadada"></div>
<!-- Begin Transaction icon -->
<svg style="left:131px;top:34px" width="17" height="18" viewBox="0 0 17 18"><g fill="none" stroke="#777" stroke-width="1"><ellipse cx="6.500" cy="3" rx="5.500" ry="2.300"></ellipse><path d="M1 3v9.500c0 1.300 2 2.300 5 2.300M12 3v4"></path><path d="M1 6.200c0 1.300 2.500 2.300 5.500 2.300s5.500-1 5.500-2.300M1 9.400c0 1.300 2.500 2.300 5.500 2.300"></path></g><path d="M9.500 9.500l6 4-6 4z" fill="none" stroke="#1a7fe0" stroke-width="1.100" stroke-linejoin="round"></path></svg>
<div class="t" style="left: 150.2px; top: 36px; letter-spacing: -0.01px;">Begin Transaction</div>
<div class="abs" style="left:266px;top:32px;width:1px;height:24px;background:#dadada"></div>
<!-- Cell Editor icon -->
<svg style="left:277px;top:34px" width="17" height="17" viewBox="0 0 17 17"><path d="M8 3.500H2.500a2 2 0 0 0-2 2v9a2 2 0 0 0 2 2h10a2 2 0 0 0 2-2V9" fill="none" stroke="#666" stroke-width="1"></path><path d="M12.700 1l2.600 2.600-7.300 7.400-3.300.8.700-3.400z" fill="#fff" stroke="#1a7fe0" stroke-width="1.100" stroke-linejoin="round"></path></svg>
<div class="t" style="left: 295.9px; top: 36px; letter-spacing: 0px;">Cell Editor</div>
<!-- Filter & Sort icon -->
<svg style="left:365px;top:34px" width="17" height="18" viewBox="0 0 17 18"><path d="M.5 8.500h10l-3.800 4v4l-2.400-1.200v-2.800z" fill="none" stroke="#666" stroke-width="1" stroke-linejoin="round"></path><path d="M8 0v6M5.800 3.800L8 6.200l2.200-2.400" fill="none" stroke="#1a7fe0" stroke-width="1.200"></path><path d="M12 1.500h5M12 3.500h5M12 5.500h5" stroke="#555" stroke-width=".9"></path></svg>
<div class="t" style="left: 384.1px; top: 36px; letter-spacing: 0.16px;">Filter &amp; Sort</div>
<!-- Columns icon -->
<svg style="left:463px;top:35px" width="16" height="16" viewBox="0 0 16 16"><rect x=".5" y=".5" width="15" height="15" rx="1.500" fill="#fff" stroke="#666"></rect><path d="M.5 5.500h15M.5 10.500h15" stroke="#666" stroke-width="1"></path><path d="M5.500 .5v15M10.500 .5v15" stroke="#1a7fe0" stroke-width="1.200"></path></svg>
<div class="t" style="left: 482px; top: 36px; letter-spacing: -0.22px;">Columns</div>
<div class="abs" style="left:544px;top:32px;width:1px;height:24px;background:#dadada"></div>
<!-- Data Profiling icon -->
<svg style="left:554px;top:34px" width="17" height="17" viewBox="0 0 17 17"><g fill="none" stroke="#1a7fe0" stroke-width="1"><rect x=".5" y="10.500" width="2.400" height="6" rx="1.200"></rect><rect x="4.500" y="6.500" width="2.400" height="10" rx="1.200"></rect><rect x="8.500" y="9.500" width="2.400" height="7" rx="1.200"></rect><rect x="12.500" y="11.500" width="2.400" height="5" rx="1.200"></rect></g><circle cx="11.500" cy="3.500" r="2.800" fill="none" stroke="#666" stroke-width="1"></circle><path d="M13.500 5.500L16 8" stroke="#666" stroke-width="1.200"></path></svg>
<div class="t" style="left: 573.9px; top: 36px; letter-spacing: 0.06px;">Data Profiling</div>
<!-- >> -->
<svg style="left:700px;top:32px" width="9" height="7" viewBox="0 0 9 7"><path d="M.8.500l3 3-3 3M5 .500l3 3-3 3" fill="none" stroke="#000" stroke-width="1.200"></path></svg>
<svg style="left:701px;top:48px" width="6" height="4" viewBox="0 0 6 4"><path d="M0 0h6L3 3.500z" fill="#000"></path></svg>
<svg style="left:719px;top:37px" width="15" height="15" viewBox="0 0 15 15"><path d="M.7 4.500V1.500a.8.800 0 0 1 .8-.8h3M10.500.7h3a.8.800 0 0 1 .8.800v3M14.300 10.500v3a.8.800 0 0 1-.8.800h-3M4.500 14.300h-3a.8.800 0 0 1-.8-.8v-3" fill="none" stroke="#1a7fe0" stroke-width="1.300"></path></svg>
<!-- grid background -->
<div class="abs" style="left:0;top:57px;width:738px;height:538px;background:#fff"></div>
<!-- header -->
<div class="abs" style="left:0;top:57px;width:722px;height:45px;background:#fff"></div><div class="abs" style="left:12px;top:102px;width:711px;height:1px;background:#dedede"></div>
<div class="hc" style="left:12px;width:150px;background:#b3d6f2;border-right:none;border-bottom:2px solid #4a9fe3;height:45px"><b style="letter-spacing: 0px; transform-origin: 0px 50%; transform: scaleX(1.137); left: 4.7px;">time</b>
 <svg style="left:6px;top:25px" width="12" height="12" viewBox="0 0 12 12"><circle cx="6" cy="6" r="5.300" fill="none" stroke="#5a7096" stroke-width="1"></circle><path d="M6 3v3.300h2.700" fill="none" stroke="#5a7096" stroke-width="1"></path></svg>
 <span style="letter-spacing: 0.46px; left: 24px;">timestamp</span></div>
<div class="hc" style="left:163px;width:112px"><b style="letter-spacing: 0px; transform-origin: 0px 50%; transform: scaleX(1.11); left: 5.2px;">region</b><svg style="left:5px;top:24px" width="16" height="15" viewBox="0 0 16 15"><g fill="none" stroke="#5f7fb0" stroke-width="1"><path d="M.5 13V9C.5 7.400 1.100 6.700 2.100 6.700S3.700 7.400 3.700 9V13M.5 10.600H3.700"></path><path d="M5.700 9.700V3h1.400c2 0 2 3.200 0 3.200H5.700M7.100 6.200c2.400 0 2.400 3.500 0 3.500H5.700"></path><path d="M14.200 8.700c-.4-.8-1-1.200-1.700-1.200-1.200 0-1.900 1-1.900 3s.7 3 1.900 3c.7 0 1.300-.4 1.700-1.200"></path></g></svg><span style="letter-spacing: 0.01px;">varchar(255)</span></div>
<div class="hc" style="left:275px;width:112px"><b style="letter-spacing: 0px; transform-origin: 0px 50%; transform: scaleX(1.047); left: 5.1px;">plant_id</b><svg style="left:5px;top:24px" width="16" height="15" viewBox="0 0 16 15"><g fill="none" stroke="#5f7fb0" stroke-width="1"><path d="M.5 13V9C.5 7.400 1.100 6.700 2.100 6.700S3.700 7.400 3.700 9V13M.5 10.600H3.700"></path><path d="M5.700 9.700V3h1.400c2 0 2 3.200 0 3.200H5.700M7.100 6.200c2.400 0 2.400 3.500 0 3.500H5.700"></path><path d="M14.200 8.700c-.4-.8-1-1.200-1.700-1.200-1.200 0-1.900 1-1.900 3s.7 3 1.900 3c.7 0 1.300-.4 1.700-1.200"></path></g></svg><span style="letter-spacing: 0.01px;">varchar(255)</span></div>
<div class="hc" style="left:387px;width:112px"><b style="letter-spacing: 0px; transform-origin: 0px 50%; transform: scaleX(1.058); left: 5px;">device_id</b><svg style="left:5px;top:24px" width="16" height="15" viewBox="0 0 16 15"><g fill="none" stroke="#5f7fb0" stroke-width="1"><path d="M.5 13V9C.5 7.400 1.100 6.700 2.100 6.700S3.700 7.400 3.700 9V13M.5 10.600H3.700"></path><path d="M5.700 9.700V3h1.400c2 0 2 3.200 0 3.200H5.700M7.100 6.200c2.400 0 2.400 3.500 0 3.500H5.700"></path><path d="M14.200 8.700c-.4-.8-1-1.200-1.700-1.200-1.200 0-1.900 1-1.900 3s.7 3 1.900 3c.7 0 1.300-.4 1.700-1.200"></path></g></svg><span style="letter-spacing: 0.01px;">varchar(255)</span></div>
<div class="hc" style="left:499px;width:112px"><b style="letter-spacing: 0px; transform-origin: 0px 50%; transform: scaleX(1.072); left: 5px;">model_id</b><svg style="left:5px;top:24px" width="16" height="15" viewBox="0 0 16 15"><g fill="none" stroke="#5f7fb0" stroke-width="1"><path d="M.5 13V9C.5 7.400 1.100 6.700 2.100 6.700S3.700 7.400 3.700 9V13M.5 10.600H3.700"></path><path d="M5.700 9.700V3h1.400c2 0 2 3.200 0 3.200H5.700M7.100 6.200c2.400 0 2.400 3.500 0 3.500H5.700"></path><path d="M14.200 8.700c-.4-.8-1-1.200-1.700-1.200-1.200 0-1.900 1-1.900 3s.7 3 1.900 3c.7 0 1.300-.4 1.700-1.200"></path></g></svg><span style="letter-spacing: 0.01px;">varchar(255)</span></div>
<div class="hc" style="left:611px;width:112px"><b style="letter-spacing: 0px; transform-origin: 0px 50%; transform: scaleX(1.064); left: 4.9px;">maintenance</b><svg style="left:5px;top:24px" width="16" height="15" viewBox="0 0 16 15"><g fill="none" stroke="#5f7fb0" stroke-width="1"><path d="M.5 13V9C.5 7.400 1.100 6.700 2.100 6.700S3.700 7.400 3.700 9V13M.5 10.600H3.700"></path><path d="M5.700 9.700V3h1.400c2 0 2 3.200 0 3.200H5.700M7.100 6.200c2.400 0 2.400 3.500 0 3.500H5.700"></path><path d="M14.200 8.700c-.4-.8-1-1.200-1.700-1.200-1.200 0-1.900 1-1.900 3s.7 3 1.900 3c.7 0 1.300-.4 1.700-1.200"></path></g></svg><span style="letter-spacing: 0.01px;">varchar(255)</span></div>

<!-- row indicator column -->

<div class="grow sel" style="top:103px"><div class="ri"></div><div class="gc cur" style="left:12px;width:151px"><span class="ct" style="letter-spacing: -0.09px;">2024-11-30 09:30:00</span></div><div class="gc" style="left:163px;width:112px"><span class="cjk">上海</span></div><div class="gc" style="left:275px;width:112px"><span class="ct" style="letter-spacing: -0.84px;">3002</span></div><div class="gc" style="left:387px;width:112px"><span class="ct" style="letter-spacing: -0.9px;">101</span></div><div class="gc" style="left:499px;width:112px"><span class="ct" style="letter-spacing: -5.13px;">F</span></div><div class="gc" style="left:611px;width:111px"><span class="ct" style="letter-spacing: -0.25px;">360</span></div></div>
<div class="grow" style="top:126px"><div class="ri"></div><div class="gc" style="left:12px;width:151px"><span class="ct" style="letter-spacing: -0.09px;">2024-11-30 14:30:00</span></div><div class="gc" style="left:163px;width:112px"><span class="cjk">上海</span></div><div class="gc" style="left:275px;width:112px"><span class="ct" style="letter-spacing: -0.84px;">3002</span></div><div class="gc" style="left:387px;width:112px"><span class="ct" style="letter-spacing: -0.9px;">101</span></div><div class="gc" style="left:499px;width:112px"><span class="ct" style="letter-spacing: -5.13px;">F</span></div><div class="gc" style="left:611px;width:111px"><span class="ct" style="letter-spacing: -0.25px;">360</span></div></div>
<div class="grow altg" style="top:149px"><div class="ri"></div><div class="gc" style="left:12px;width:151px"><span class="ct" style="letter-spacing: -0.09px;">2024-11-29 10:00:00</span></div><div class="gc" style="left:163px;width:112px"><span class="cjk">上海</span></div><div class="gc" style="left:275px;width:112px"><span class="ct" style="letter-spacing: -0.97px;">3001</span></div><div class="gc" style="left:387px;width:112px"><span class="ct" style="letter-spacing: -0.9px;">101</span></div><div class="gc" style="left:499px;width:112px"><span class="ct" style="letter-spacing: -3.8px;">D</span></div><div class="gc" style="left:611px;width:111px"><span class="ct" style="letter-spacing: -0.25px;">360</span></div></div>
<div class="grow" style="top:172px"><div class="ri"></div><div class="gc long" style="left:12px;width:151px"><span class="ct" style="letter-spacing: -0.17px;">1970-01-01 08:00:00.007</span></div><div class="gc" style="left:163px;width:112px"><span class="ct" style="letter-spacing: -0.37px;">South</span></div><div class="gc" style="left:275px;width:112px"><span class="ct" style="letter-spacing: 0px;">plant002</span></div><div class="gc" style="left:387px;width:112px"><span class="ct" style="letter-spacing: -0.16px;">device003</span></div><div class="gc" style="left:499px;width:112px"><span class="ct" style="letter-spacing: 0.25px;">model-B</span></div><div class="gc" style="left:611px;width:111px"><span class="ct" style="letter-spacing: -0.18px;">inactive</span></div></div>
<div class="grow" style="top:195px"><div class="ri"></div><div class="gc long" style="left:12px;width:151px"><span class="ct" style="letter-spacing: -0.17px;">1970-01-01 08:00:00.001</span></div><div class="gc" style="left:163px;width:112px"><span class="ct" style="letter-spacing: 0.33px;">North</span></div><div class="gc" style="left:275px;width:112px"><span class="ct" style="letter-spacing: -0.2px;">plant001</span></div><div class="gc" style="left:387px;width:112px"><span class="ct" style="letter-spacing: -0.25px;">device001</span></div><div class="gc" style="left:499px;width:112px"><span class="ct" style="letter-spacing: 0.3px;">model-A</span></div><div class="gc" style="left:611px;width:111px"><span class="ct" style="letter-spacing: -0.17px;">active</span></div></div>
<div class="grow alt" style="top:218px"><div class="ri"></div><div class="gc long" style="left:12px;width:151px"><span class="ct" style="letter-spacing: -0.17px;">1970-01-01 08:00:00.002</span></div><div class="gc" style="left:163px;width:112px"><span class="ct" style="letter-spacing: 0.33px;">North</span></div><div class="gc" style="left:275px;width:112px"><span class="ct" style="letter-spacing: -0.2px;">plant001</span></div><div class="gc" style="left:387px;width:112px"><span class="ct" style="letter-spacing: -0.25px;">device001</span></div><div class="gc" style="left:499px;width:112px"><span class="ct" style="letter-spacing: 0.3px;">model-A</span></div><div class="gc" style="left:611px;width:111px"><span class="ct" style="letter-spacing: -0.17px;">active</span></div></div>
<div class="grow" style="top:241px"><div class="ri"></div><div class="gc long" style="left:12px;width:151px"><span class="ct" style="letter-spacing: -0.17px;">1970-01-01 08:00:00.003</span></div><div class="gc" style="left:163px;width:112px"><span class="ct" style="letter-spacing: 0.33px;">North</span></div><div class="gc" style="left:275px;width:112px"><span class="ct" style="letter-spacing: -0.2px;">plant001</span></div><div class="gc" style="left:387px;width:112px"><span class="ct" style="letter-spacing: -0.25px;">device001</span></div><div class="gc" style="left:499px;width:112px"><span class="ct" style="letter-spacing: 0.3px;">model-A</span></div><div class="gc" style="left:611px;width:111px"><span class="ct" style="letter-spacing: -0.17px;">active</span></div></div>
<div class="grow" style="top:264px"><div class="ri"></div><div class="gc" style="left:12px;width:151px"><span class="ct" style="letter-spacing: -0.09px;">2024-11-27 16:38:00</span></div><div class="gc" style="left:163px;width:112px"><span class="cjk">北京</span></div><div class="gc" style="left:275px;width:112px"><span class="ct" style="letter-spacing: -0.97px;">1001</span></div><div class="gc" style="left:387px;width:112px"><span class="ct" style="letter-spacing: -0.9px;">101</span></div><div class="gc" style="left:499px;width:112px"><span class="ct" style="letter-spacing: -4.04px;">B</span></div><div class="gc" style="left:611px;width:111px"><span class="ct" style="letter-spacing: -0.35px;">180</span></div></div>
<div class="grow altg" style="top:287px"><div class="ri"></div><div class="gc" style="left:12px;width:151px"><span class="ct" style="letter-spacing: -0.09px;">2024-11-27 16:39:00</span></div><div class="gc" style="left:163px;width:112px"><span class="cjk">北京</span></div><div class="gc" style="left:275px;width:112px"><span class="ct" style="letter-spacing: -0.97px;">1001</span></div><div class="gc" style="left:387px;width:112px"><span class="ct" style="letter-spacing: -0.9px;">101</span></div><div class="gc" style="left:499px;width:112px"><span class="ct" style="letter-spacing: -4.04px;">B</span></div><div class="gc" style="left:611px;width:111px"><span class="ct" style="letter-spacing: -0.35px;">180</span></div></div>
<div class="grow" style="top:310px"><div class="ri"></div><div class="gc" style="left:12px;width:151px"><span class="ct" style="letter-spacing: -0.09px;">2024-11-27 16:40:00</span></div><div class="gc" style="left:163px;width:112px"><span class="cjk">北京</span></div><div class="gc" style="left:275px;width:112px"><span class="ct" style="letter-spacing: -0.97px;">1001</span></div><div class="gc" style="left:387px;width:112px"><span class="ct" style="letter-spacing: -0.9px;">101</span></div><div class="gc" style="left:499px;width:112px"><span class="ct" style="letter-spacing: -4.04px;">B</span></div><div class="gc" style="left:611px;width:111px"><span class="ct" style="letter-spacing: -0.35px;">180</span></div></div>
<div class="grow" style="top:333px"><div class="ri"></div><div class="gc" style="left:12px;width:151px"><span class="ct" style="letter-spacing: -0.09px;">2024-11-27 16:41:00</span></div><div class="gc" style="left:163px;width:112px"><span class="cjk">北京</span></div><div class="gc" style="left:275px;width:112px"><span class="ct" style="letter-spacing: -0.97px;">1001</span></div><div class="gc" style="left:387px;width:112px"><span class="ct" style="letter-spacing: -0.9px;">101</span></div><div class="gc" style="left:499px;width:112px"><span class="ct" style="letter-spacing: -4.04px;">B</span></div><div class="gc" style="left:611px;width:111px"><span class="ct" style="letter-spacing: -0.35px;">180</span></div></div>
<div class="grow alt" style="top:356px"><div class="ri"></div><div class="gc" style="left:12px;width:151px"><span class="ct" style="letter-spacing: -0.09px;">2024-11-27 16:42:00</span></div><div class="gc" style="left:163px;width:112px"><span class="cjk">北京</span></div><div class="gc" style="left:275px;width:112px"><span class="ct" style="letter-spacing: -0.97px;">1001</span></div><div class="gc" style="left:387px;width:112px"><span class="ct" style="letter-spacing: -0.9px;">101</span></div><div class="gc" style="left:499px;width:112px"><span class="ct" style="letter-spacing: -4.04px;">B</span></div><div class="gc" style="left:611px;width:111px"><span class="ct" style="letter-spacing: -0.35px;">180</span></div></div>
<div class="grow" style="top:379px"><div class="ri"></div><div class="gc" style="left:12px;width:151px"><span class="ct" style="letter-spacing: -0.09px;">2024-11-27 16:43:00</span></div><div class="gc" style="left:163px;width:112px"><span class="cjk">北京</span></div><div class="gc" style="left:275px;width:112px"><span class="ct" style="letter-spacing: -0.97px;">1001</span></div><div class="gc" style="left:387px;width:112px"><span class="ct" style="letter-spacing: -0.9px;">101</span></div><div class="gc" style="left:499px;width:112px"><span class="ct" style="letter-spacing: -4.04px;">B</span></div><div class="gc" style="left:611px;width:111px"><span class="ct" style="letter-spacing: -0.35px;">180</span></div></div>
<div class="grow" style="top:402px"><div class="ri"></div><div class="gc" style="left:12px;width:151px"><span class="ct" style="letter-spacing: -0.09px;">2024-11-27 16:44:00</span></div><div class="gc" style="left:163px;width:112px"><span class="cjk">北京</span></div><div class="gc" style="left:275px;width:112px"><span class="ct" style="letter-spacing: -0.97px;">1001</span></div><div class="gc" style="left:387px;width:112px"><span class="ct" style="letter-spacing: -0.9px;">101</span></div><div class="gc" style="left:499px;width:112px"><span class="ct" style="letter-spacing: -4.04px;">B</span></div><div class="gc" style="left:611px;width:111px"><span class="ct" style="letter-spacing: -0.35px;">180</span></div></div>
<div class="grow altg" style="top:425px"><div class="ri"></div><div class="gc" style="left:12px;width:151px"><span class="ct" style="letter-spacing: -0.14px;">2026-01-21 10:30:00</span></div><div class="gc" style="left:163px;width:112px"><span class="cjk">北京</span></div><div class="gc" style="left:275px;width:112px"><span class="ct" style="letter-spacing: -0.2px;">plant001</span></div><div class="gc" style="left:387px;width:112px"><span class="ct" style="letter-spacing: -0.13px;">device999</span></div><div class="gc" style="left:499px;width:112px"><span class="ct" style="letter-spacing: 0.28px;">model-X</span></div><div class="gc" style="left:611px;width:111px"><span class="ct" style="letter-spacing: -0.17px;">active</span></div></div>
<div class="grow" style="top:448px"><div class="ri"></div><div class="gc" style="left:12px;width:151px"><span class="ct" style="letter-spacing: -0.03px;">2024-11-29 11:00:00</span></div><div class="gc" style="left:163px;width:112px"><span class="cjk">上海</span></div><div class="gc" style="left:275px;width:112px"><span class="ct" style="letter-spacing: -0.84px;">3002</span></div><div class="gc" style="left:387px;width:112px"><span class="ct" style="letter-spacing: -0.8px;">100</span></div><div class="gc" style="left:499px;width:112px"><span class="ct" style="letter-spacing: -7.04px;">E</span></div><div class="gc" style="left:611px;width:111px"><span class="ct" style="letter-spacing: -0.35px;">180</span></div></div>
<div class="grow" style="top:471px"><div class="ri"></div><div class="gc" style="left:12px;width:151px"><span class="ct" style="letter-spacing: -0.09px;">2024-11-29 18:30:00</span></div><div class="gc" style="left:163px;width:112px"><span class="cjk">上海</span></div><div class="gc" style="left:275px;width:112px"><span class="ct" style="letter-spacing: -0.84px;">3002</span></div><div class="gc" style="left:387px;width:112px"><span class="ct" style="letter-spacing: -0.8px;">100</span></div><div class="gc" style="left:499px;width:112px"><span class="ct" style="letter-spacing: -7.04px;">E</span></div><div class="gc" style="left:611px;width:111px"><span class="ct" style="letter-spacing: -0.35px;">180</span></div></div>
<div class="grow alt" style="top:494px"><div class="ri"></div><div class="gc" style="left:12px;width:151px"><span class="ct" style="letter-spacing: -0.09px;">2024-11-28 08:00:00</span></div><div class="gc" style="left:163px;width:112px"><span class="cjk">上海</span></div><div class="gc" style="left:275px;width:112px"><span class="ct" style="letter-spacing: -0.97px;">3001</span></div><div class="gc" style="left:387px;width:112px"><span class="ct" style="letter-spacing: -0.8px;">100</span></div><div class="gc" style="left:499px;width:112px"><span class="ct" style="letter-spacing: -4.39px;">C</span></div><div class="gc" style="left:611px;width:111px"><span class="ct" style="letter-spacing: -0.47px;">90</span></div></div>
<div class="grow" style="top:517px"><div class="ri"></div><div class="gc" style="left:12px;width:151px"><span class="ct" style="letter-spacing: -0.09px;">2024-11-28 09:00:00</span></div><div class="gc" style="left:163px;width:112px"><span class="cjk">上海</span></div><div class="gc" style="left:275px;width:112px"><span class="ct" style="letter-spacing: -0.97px;">3001</span></div><div class="gc" style="left:387px;width:112px"><span class="ct" style="letter-spacing: -0.8px;">100</span></div><div class="gc" style="left:499px;width:112px"><span class="ct" style="letter-spacing: -4.39px;">C</span></div><div class="gc" style="left:611px;width:111px"><span class="ct" style="letter-spacing: -0.47px;">90</span></div></div>
<div class="grow" style="top:540px"><div class="ri"></div><div class="gc" style="left:12px;width:151px"><span class="ct" style="letter-spacing: -0.09px;">2024-11-28 10:00:00</span></div><div class="gc" style="left:163px;width:112px"><span class="cjk">上海</span></div><div class="gc" style="left:275px;width:112px"><span class="ct" style="letter-spacing: -0.97px;">3001</span></div><div class="gc" style="left:387px;width:112px"><span class="ct" style="letter-spacing: -0.8px;">100</span></div><div class="gc" style="left:499px;width:112px"><span class="ct" style="letter-spacing: -4.39px;">C</span></div><div class="gc" style="left:611px;width:111px"><span class="ct" style="letter-spacing: -0.47px;">90</span></div></div>
<div class="grow altg" style="top:563px"><div class="ri"></div><div class="gc" style="left:12px;width:151px"><span class="ct" style="letter-spacing: -0.03px;">2024-11-28 11:00:00</span></div><div class="gc" style="left:163px;width:112px"><span class="cjk">上海</span></div><div class="gc" style="left:275px;width:112px"><span class="ct" style="letter-spacing: -0.97px;">3001</span></div><div class="gc" style="left:387px;width:112px"><span class="ct" style="letter-spacing: -0.8px;">100</span></div><div class="gc" style="left:499px;width:112px"><span class="ct" style="letter-spacing: -4.39px;">C</span></div><div class="gc" style="left:611px;width:111px"><span class="ct" style="letter-spacing: -0.47px;">90</span></div></div>

<!-- current row indicator -->
<div class="abs" style="left:0;top:103px;width:9px;height:22px;background:#a9cff0"></div>
<div class="abs" style="left:9px;top:103px;width:2px;height:22px;background:#4a9fe3"></div>
<!-- vscroll -->
<div class="abs" style="left:722px;top:57px;width:17px;height:538px;background:#f0f0f0"></div>
<svg style="left:726px;top:63px" width="8" height="6" viewBox="0 0 8 6"><path d="M4 0L8 5.800H0z" fill="#858585"></path></svg>
<div class="abs" style="left:727px;top:74px;width:6px;height:235px;background:#858585;border-radius:3px"></div>
<svg style="left:726px;top:583px" width="8" height="6" viewBox="0 0 8 6"><path d="M0 0h8L4 5.800z" fill="#858585"></path></svg>
<!-- hscroll -->
<div class="abs" style="left:17px;top:601px;width:433px;height:2px;background:#808080"></div>
<!-- nav bar -->
<svg style="left:7px;top:617px" width="11" height="11" viewBox="0 0 11 11"><path d="M5.500 0v11M0 5.500h11" stroke="#333" stroke-width="1.600"></path></svg>
<svg style="left:31px;top:622px" width="11" height="2" viewBox="0 0 11 2"><rect width="11" height="1.600" fill="#333"></rect></svg>
<svg style="left:54px;top:617px" width="13" height="11" viewBox="0 0 13 11"><path d="M1 6l3.500 3.500L12 1.500" fill="none" stroke="#c4c4c4" stroke-width="1.800"></path></svg>
<svg style="left:79px;top:617px" width="11" height="11" viewBox="0 0 11 11"><path d="M1 1l9 9M10 1l-9 9" stroke="#c4c4c4" stroke-width="1.800"></path></svg>
<svg style="left:103px;top:616px" width="12" height="12" viewBox="0 0 12 12"><path d="M10 3.500A4.500 4.500 0 1 0 10.500 7" fill="none" stroke="#333" stroke-width="1.800"></path><path d="M11.500 0v4.500H7z" fill="#333"></path></svg>
<svg style="left:127px;top:617px" width="10" height="10" viewBox="0 0 10 10"><rect width="10" height="10" fill="#c4c4c4"></rect></svg>
<!-- pager -->
<svg style="left:540px;top:618px" width="13" height="9" viewBox="0 0 13 9"><path d="M.9 0v9" stroke="#444" stroke-width="1.700"></path><path d="M12.500 4.500H6" stroke="#444" stroke-width="1.600"></path><path d="M3 4.500L7.500.8v7.400z" fill="#444"></path></svg>
<svg style="left:565px;top:618px" width="11" height="9" viewBox="0 0 11 9"><path d="M10.500 4.500H4" stroke="#444" stroke-width="1.600"></path><path d="M.5 4.500L5.500.8v7.400z" fill="#444"></path></svg>
<div class="abs" style="left:582px;top:615px;width:25px;height:19px;background:#fff"></div>
<div class="t" style="left:589px;top:616px">1</div>
<svg style="left:612px;top:618px" width="11" height="9" viewBox="0 0 11 9"><path d="M.5 4.500H7" stroke="#444" stroke-width="1.600"></path><path d="M10.500 4.500L5.500.8v7.400z" fill="#444"></path></svg>
<svg style="left:635px;top:618px" width="13" height="9" viewBox="0 0 13 9"><path d="M12.100 0v9" stroke="#444" stroke-width="1.700"></path><path d="M.5 4.500H7" stroke="#444" stroke-width="1.600"></path><path d="M10 4.500L5.500.8v7.400z" fill="#444"></path></svg>
<svg style="left:659px;top:616px" width="12" height="12" viewBox="0 0 12 12"><path d="M6 0l1 1.600 1.800-.6.500 1.800 1.900.3-.4 1.900L12 6l-1.200 1 .4 1.900-1.900.3-.5 1.800-1.800-.6L6 12l-1-1.600-1.800.6-.5-1.800-1.900-.3.400-1.900L0 6l1.200-1-.4-1.900 1.900-.3.500-1.800 1.800.6z" fill="#4a4a4a"></path><circle cx="6" cy="6" r="2.500" fill="#f0f0f0"></circle></svg>
<div class="abs" style="left:683px;top:614px;width:1px;height:16px;background:#cfcfcf"></div>
<div class="abs" style="left:690px;top:611px;width:24px;height:21px;background:#cce8ff;border:1px solid #99d1ff;border-radius:3px"></div>
<svg style="left:696px;top:615px" width="14" height="14" viewBox="0 0 14 14"><rect x="1" y="1" width="12" height="12" fill="#dff0ff" stroke="#555" stroke-width="1.800"></rect><path d="M1 5.200h12M1 9h12M5.200 1v12M9 1v12" stroke="#555" stroke-width="1.300"></path></svg>
<svg style="left:719px;top:615px" width="14" height="14" viewBox="0 0 14 14"><rect x=".8" y="1.300" width="12.400" height="11.900" fill="#fff" stroke="#555" stroke-width="1.600"></rect><rect x=".8" y=".5" width="12.400" height="2" fill="#555"></rect><rect x="3.500" y="4.800" width="7.500" height="2.400" fill="none" stroke="#555" stroke-width="1"></rect><rect x="3.500" y="8.800" width="7.500" height="2.400" fill="none" stroke="#555" stroke-width="1"></rect></svg>
</div>

<div id="right"><div class="abs" style="left:1px;top:0;width:147px;height:634px">
<!-- icons row (page y≈130 => local 12) -->
<svg style="left:30px;top:5px" width="14" height="14" viewBox="0 0 14 14"><circle cx="7" cy="7" r="6.300" fill="none" stroke="#444" stroke-width="1"></circle><rect x="6.400" y="6" width="1.300" height="4.500" fill="#444"></rect><rect x="6.400" y="3.500" width="1.300" height="1.400" fill="#444"></rect></svg>
<svg style="left:54px;top:5px" width="15" height="14" viewBox="0 0 15 14"><rect x=".5" y=".5" width="13.500" height="13" rx="1.800" fill="#fff" stroke="#555"></rect><path d="M2.800 4.800v4.400h.9c2.200 0 2.200-4.400 0-4.400zM6.500 4.800v4.400h.9c2.200 0 2.200-4.400 0-4.400zM10.300 4.500v4.700h2" fill="none" stroke="#444" stroke-width="1.100"></path></svg>
<svg style="left:78px;top:4px" width="16" height="16" viewBox="0 0 16 16"><rect width="16" height="16" rx="1" fill="#1e90ff"></rect><rect x="2.300" y="2.300" width="4.400" height="3" fill="#fff"></rect><rect x="9.600" y="2.300" width="4.400" height="3" fill="#fff"></rect><rect x="2.300" y="6.600" width="4.400" height="3" fill="#fff"></rect><rect x="9.600" y="6.600" width="4.400" height="3" fill="#fff"></rect><rect x="2.300" y="10.900" width="4.400" height="3" fill="#fff"></rect><rect x="9.600" y="10.900" width="4.400" height="3" fill="#fff"></rect></svg>
<svg style="left:106px;top:5px" width="14" height="13" viewBox="0 0 14 13"><path d="M.6 13V5.200L3.700 .8 6.800 5.200V13M.6 8.200h6.200M12.200 0v13" fill="none" stroke="#555" stroke-width="1.100"></path></svg>
<svg style="left:127px;top:6px" width="13" height="13" viewBox="0 0 13 13"><path d="M6.500.700h5.800v5.800M6.500 12.300H.700V6.500" fill="none" stroke="#1e90ff" stroke-width="1.300"></path></svg>
<!-- key + name -->
<svg style="left:16px;top:38px" width="15" height="15"><use href="#i-key"></use></svg>
<div class="t" style="left: 39.9px; top: 40px; font-weight: bold; letter-spacing: 0px; transform-origin: 0px 50%; transform: scaleX(1.145);">time</div>
<div class="t rl" style="left: 15.9px; top: 67px; letter-spacing: -0.76px;">Type</div>
<div class="t" style="left: 15.9px; top: 88px; letter-spacing: 0.17px;">timestamp</div>
<div class="t rl" style="left: 15.9px; top: 122px; letter-spacing: 0.16px;">Not null</div>
<div class="t" style="left: 15.9px; top: 143px; letter-spacing: 0.55px;">No</div>
<div class="t rl" style="left: 15.9px; top: 177px; letter-spacing: -0.18px;">Default Value</div>
<div class="t" style="left: 15.5px; top: 198px; letter-spacing: -0.4px;">(NULL)</div>
<div class="t rl" style="left: 15.9px; top: 232px; letter-spacing: -0.43px;">Comment</div>
<div class="t" style="left: 14.3px; top: 253px; letter-spacing: 0.24px;">--</div>
</div>
</div>

<div id="status">
<div class="abs" style="left:227px;top:0;width:1px;height:20px;background:#dcdcdc"></div>
<div class="t" style="left: 230.6px; top: 3px; letter-spacing: -0.24px;">SELECT * FROM `database1`.`table1` LIMIT 0,1000</div>
<div class="abs" style="left:553px;top:0;width:1px;height:20px;background:#dcdcdc"></div>
<svg style="left:557px;top:3px" width="16" height="15" viewBox="0 0 16 15"><path d="M8 .8L15.500 14H.5z" fill="#f7a800" stroke="#f7a800" stroke-width="1" stroke-linejoin="round"></path><rect x="7.200" y="5" width="1.600" height="5" fill="#fff"></rect><rect x="7.200" y="11" width="1.600" height="1.600" fill="#fff"></rect></svg>
<div class="abs" style="left:623px;top:0;width:1px;height:20px;background:#dcdcdc"></div>
<div class="t" style="left: 628.1px; top: 3px; letter-spacing: 0.13px;">Record 1 of 25 in page 1</div>
<div class="abs" style="left:823px;top:0;width:1px;height:20px;background:#dcdcdc"></div>
<div class="t" style="left: 828.1px; top: 3px; letter-spacing: -0.1px;">Last Refresh: &lt;1m</div>
<!-- small icons bottom right -->
<div class="abs" style="left:1067px;top:2px;width:22px;height:20px;background:#cce4f7;border:1px solid #99c9ef;border-radius:3px"></div>
<div class="abs" style="left:1090px;top:2px;width:22px;height:20px;background:#cce4f7;border:1px solid #99c9ef;border-radius:3px"></div>
<svg style="left:1074px;top:6px" width="12" height="14" viewBox="0 0 12 14"><rect x=".5" y=".5" width="11" height="14" fill="none" stroke="#555"></rect><rect x="2" y="2" width="3" height="12" fill="#444"></rect></svg>
<svg style="left:1097px;top:6px" width="12" height="14" viewBox="0 0 12 14"><rect x=".5" y=".5" width="11" height="14" fill="none" stroke="#555"></rect><rect x="7" y="2" width="3" height="12" fill="#444"></rect></svg>
</div>
<!-- watermark -->
<div class="abs" id="wm" style="left:996px;top:728px;width:119px;height:38px;overflow:hidden"><div style="position:absolute;left:1px;top:0;height:46px;color:#ff0000;font-weight:bold;font-size:36px;line-height:46px;white-space:nowrap;transform-origin:0 0;transform:scaleX(.652);letter-spacing:1.500px;-webkit-text-stroke:2.400px #ff0000;paint-order:stroke fill">cxy5.com</div></div>


</body></html>
